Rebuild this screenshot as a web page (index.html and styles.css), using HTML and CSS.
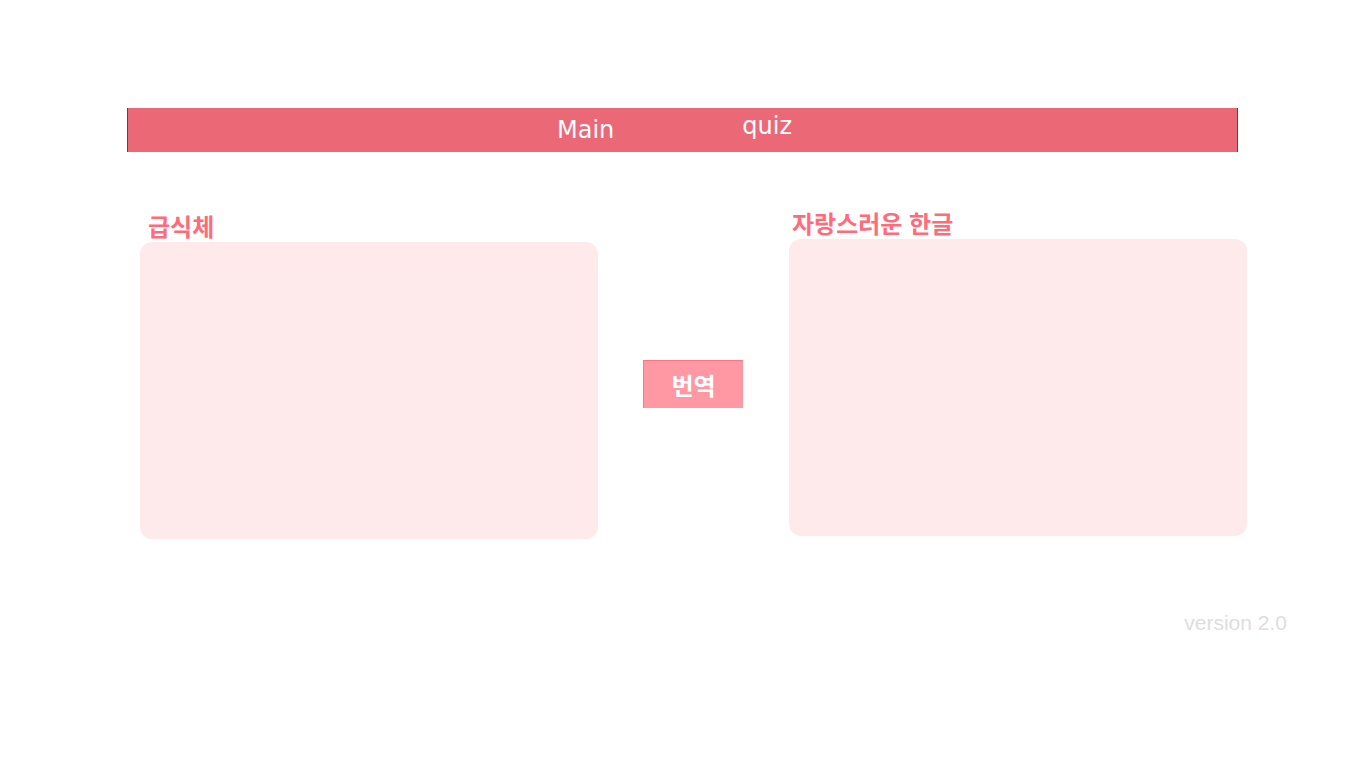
FILE: index.html
```html
<!DOCTYPE html>
<html lang="ko">
<head>
<meta charset="utf-8">
<meta name="viewport" content="width=device-width, initial-scale=1">
<title>급식체 번역</title>
<link rel="stylesheet" href="styles.css">
</head>
<body>
<nav class="nav">
  <a class="nav-link nav-link-main" href="#main">Main</a>
  <a class="nav-link nav-link-quiz" href="#quiz">quiz</a>
</nav>
<main class="translator" id="main">
  <div class="panel panel-source">
    <label class="panel-title" for="source">급식체</label>
    <textarea class="panel-text" id="source"></textarea>
  </div>
  <button class="translate" type="button">번역</button>
  <div class="panel">
    <label class="panel-title" for="result">자랑스러운 한글</label>
    <textarea class="panel-text" id="result" readonly></textarea>
  </div>
</main>
<footer class="version">version 2.0</footer>
</body>
</html>
```

FILE: styles.css
```css
* {
  box-sizing: border-box;
}

body {
  margin: 0;
  padding-top: 108px;
  background: #fff;
  font-family: "Noto Sans CJK KR", sans-serif;
}

.nav {
  display: flex;
  justify-content: center;
  gap: 128px;
  height: 44px;
  margin: 0 128px 0 127px;
  padding: 4px 16px 4px 0;
  background: #eb6976;
  border: solid #55474b;
  border-width: 0 1px;
}

.nav-link {
  color: #fff;
  font: 24px/28px "DejaVu Sans", sans-serif;
  text-decoration: none;
}

.nav-link-main {
  align-self: center;
}

.nav-link-quiz {
  align-self: flex-start;
}

.translator {
  display: grid;
  grid-template-columns: 1fr 101px 1fr;
  column-gap: 45px;
  align-items: start;
  margin: 55px 119px 0 140px;
}

.panel {
  display: flex;
  flex-direction: column;
}

.panel-source {
  padding-top: 3px;
}

.panel-title {
  padding-left: 3px;
  color: #ff6b7b;
  font-size: 24px;
  font-weight: 700;
  line-height: 32px;
}

.panel-source .panel-title {
  padding-left: 8px;
}

.panel-text {
  width: 100%;
  height: 297px;
  padding: 16px;
  border: 0;
  border-radius: 12px;
  outline: 0;
  background: #ffeaeb;
  color: #ff6b7b;
  font: 20px/28px "Noto Sans CJK KR", sans-serif;
  resize: none;
}

.translate {
  width: 100px;
  height: 48px;
  margin-top: 153px;
  padding: 0;
  border: solid #f87887;
  border-width: 1px 0 0 1px;
  background: #ff98a2;
  color: #fff;
  font: 700 24px/32px "Noto Sans CJK KR", sans-serif;
}

.version {
  margin: 70px 79px 0 0;
  color: #dedede;
  font: 21px/28px "Liberation Sans", sans-serif;
  text-align: right;
}
```
